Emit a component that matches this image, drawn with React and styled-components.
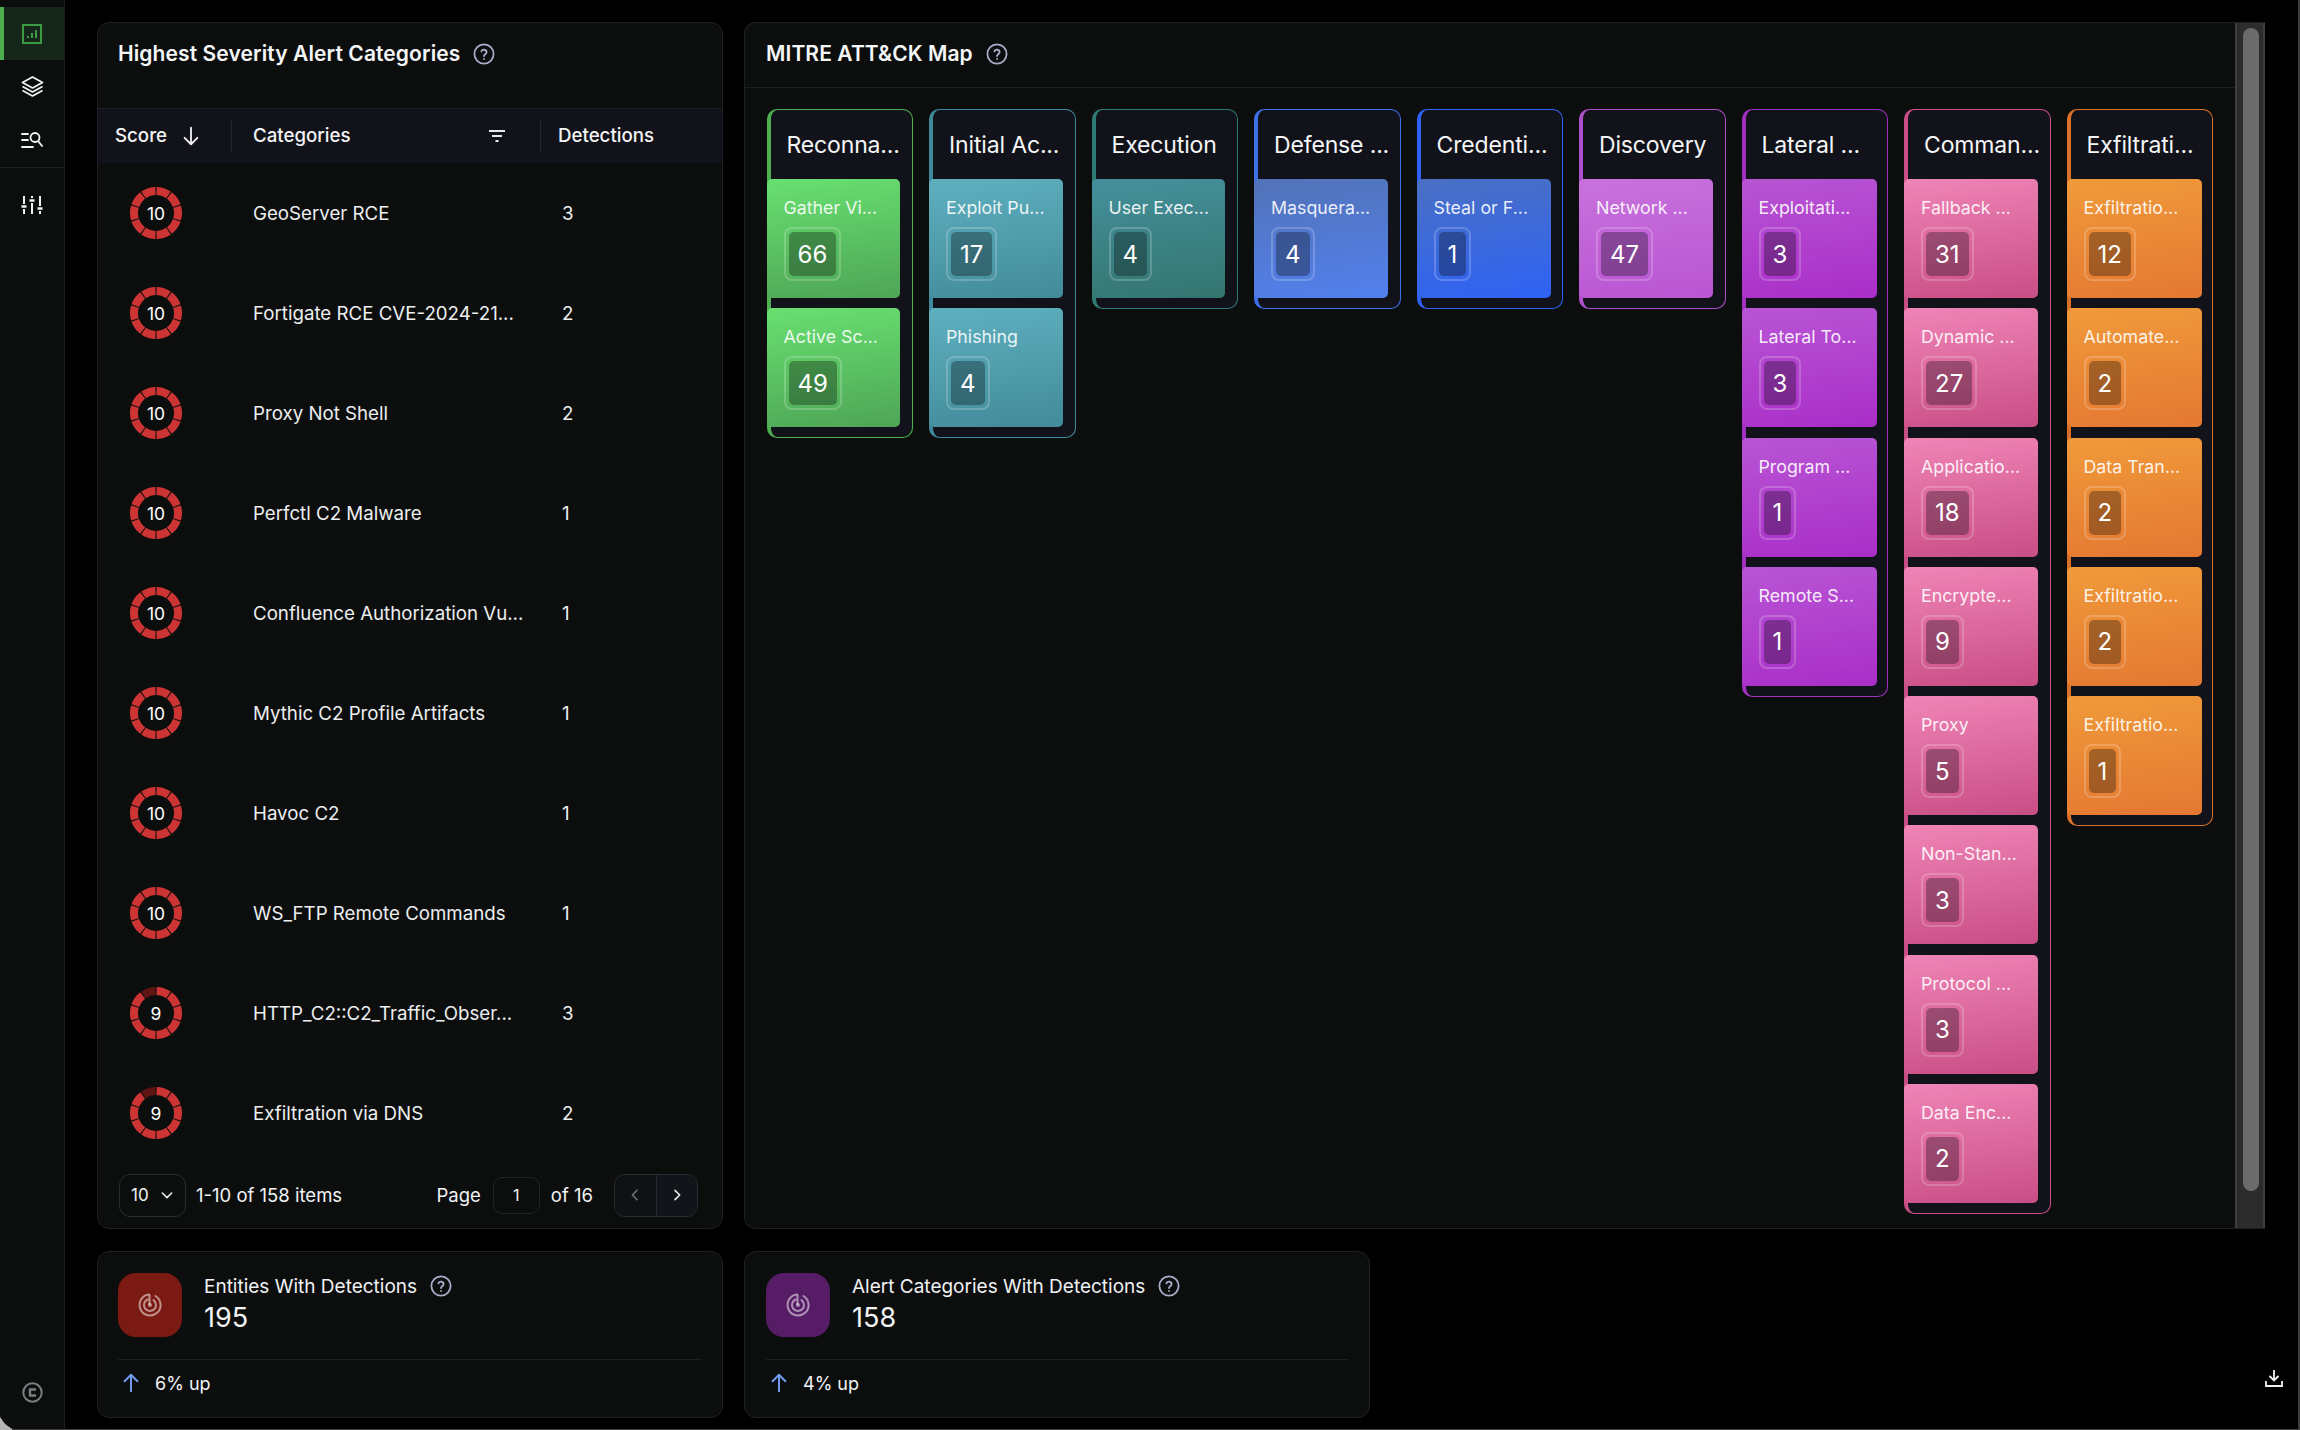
import React from "react";
import styled, { createGlobalStyle } from "styled-components";

const Global = createGlobalStyle`
  html { height: 100%; background: linear-gradient(45deg, #b5b5b5 0 9px, #3c3c3c 9px); }
  body { margin: 0; padding: 0; font-family: "Inter", "Liberation Sans", sans-serif; color: #f2f3f5; }
  * { box-sizing: border-box; }
`;

const Shell = styled.div`
  width: 2298px; height: 1429px; background: #000; display: flex; overflow: hidden;
  border-bottom-left-radius: 18px;
`;
const Rail = styled.nav`
  width: 65px; flex: none; background: #0c0e0e; border-right: 1px solid #1c1e22;
  display: flex; flex-direction: column; padding-top: 7px;
`;
const RailItem = styled.div`
  height: ${p => p.$h || 53}px; display: flex; align-items: center; justify-content: center;
  background: ${p => p.$active ? "#16261a" : "transparent"};
  border-left: 4px solid ${p => p.$active ? "#4caf50" : "transparent"};
  padding-right: 4px; flex: none;
`;
const RailLine = styled.div` height: 1px; background: #1c1e22; margin: 0 0 11px; flex: none; `;
const RailSpacer = styled.div` flex: 1; `;
const RailFoot = styled.div` display: flex; justify-content: center; padding-bottom: 26px; `;

const Main = styled.main`
  flex: 1; padding: 22px 33px 0 32px; display: grid;
  grid-template-columns: 626px 1fr; grid-template-rows: 1207px 167px; column-gap: 21px; row-gap: 22px;
`;
const Card = styled.section`
  background: #0c0e0e; border: 1px solid #1e2025; border-radius: 12px; min-width: 0;
`;
const LeftCard = styled(Card)` display: flex; flex-direction: column; overflow: hidden; `;
const CardTitle = styled.h2`
  margin: 0; font-size: 21px; font-weight: 600; display: flex; align-items: center; gap: 12px;
  height: 61px; padding: 0 0 0 20px; color: #f5f6f7; white-space: nowrap; letter-spacing: 0.1px; flex: none;
`;
const Gap = styled.div` height: 24px; flex: none; `;
const THead = styled.div`
  height: 55px; flex: none; background: #12131a; border-top: 1px solid #1e2028; display: flex; align-items: center;
  font-size: 18.7px; font-weight: 500; padding-bottom: 1px;
`;
const Th = styled.div`
  height: 34px; display: flex; align-items: center; width: ${p => p.$w}px; padding-left: ${p => p.$pl}px;
  border-right: ${p => p.$sep ? "1px solid #24262e" : "none"}; justify-content: ${p => p.$between ? "space-between" : "flex-start"};
  padding-right: ${p => p.$pr || 0}px; flex: none;
`;
const Rows = styled.div` flex: none; `;
const Row = styled.div`
  height: 100px; display: flex; align-items: center; font-size: 18.7px; color: #eceef0;
`;
const ScoreCell = styled.div` width: 155px; padding-left: 32px; flex: none; display: flex; `;
const NameCell = styled.div` width: 305px; flex: none; white-space: nowrap; `;
const CountCell = styled.div` padding-left: 4px; `;

const Pager = styled.div`
  height: 65px; flex: none; padding: 0 24px 1px 21px; display: flex; align-items: center; font-size: 18.5px;
`;
const Select = styled.div`
  width: 67px; height: 43px; border: 1px solid #2a2c33; border-radius: 11px; display: flex; align-items: center;
  justify-content: space-between; padding: 0 10px 0 11px; margin-right: 10px; font-size: 17px;
`;
const PagerText = styled.span` white-space: nowrap; `;
const PagerSpace = styled.div` flex: 1; `;
const PageInput = styled.div`
  width: 47px; height: 37px; border: 1px solid #22242a; border-radius: 9px; display: flex; align-items: center;
  justify-content: center; margin: 0 11px 0 12px; font-size: 16px;
`;
const PageBtns = styled.div`
  margin-left: 21px; width: 84px; height: 43px; border: 1px solid #2a2c33; border-radius: 11px; display: flex; overflow: hidden; flex: none;
`;
const PageBtn = styled.div`
  flex: 1; display: flex; align-items: center; justify-content: center;
  background: ${p => p.$dim ? "#0f1114" : "#12141a"};
  border-left: ${p => p.$sep ? "1px solid #2a2c33" : "none"};
`;

const MapCard = styled(Card)`
  display: flex; flex-direction: column; position: relative; overflow: hidden;
  border-radius: 12px 0 0 12px; border-right: none;
`;
const MapHead = styled(CardTitle)` height: 65px; padding: 0 0 3px 21px; border-bottom: 1px solid #1c1e21; `;
const MapBody = styled.div` display: flex; gap: 16px; align-items: flex-start; padding: 21px 0 0 21.500px; `;
const Track = styled.div`
  position: absolute; right: 0; top: 0; bottom: 0; width: 30px; background: #2c2c2c;
  border-left: 2px solid #3e3e3e; border-right: 2px solid #3e3e3e;
`;
const Thumb = styled.div`
  position: absolute; left: 6px; top: 5px; width: 16px; height: 1163px; background: #6b6b6b; border-radius: 8px;
`;
const Column = styled.div`
  width: 146.5px; flex: none; background: #12131a; border: 1px solid ${p => p.$c}; border-left-width: 4px;
  border-radius: 10px; padding-bottom: 10px;
`;
const ColHead = styled.div`
  height: 69px; display: flex; align-items: center; padding: 0 0 0 16px; font-size: 23px; font-weight: 400; white-space: nowrap; color: #f5f6f7; letter-spacing: -0.15px;
`;
const Tech = styled.div`
  margin-left: -4px; width: ${p => p.$w || 134}px; height: 119px; border-radius: 5px; padding: 18px 0 0 17px;
  background: linear-gradient(172deg, ${p => p.$a}, ${p => p.$b});
  & + & { margin-top: 10.25px; }
`;
const TechName = styled.div`
  font-size: 17.8px; line-height: 22px; color: rgba(255,255,255,.9); white-space: nowrap; font-weight: 400;
`;
const Badge = styled.div`
  display: inline-flex; margin-top: 8px; border: 2px solid rgba(255,255,255,.2); border-radius: 8px; padding: 3px;
`;
const BadgeIn = styled.div`
  height: 44px; padding: 0 9px; border-radius: 5px; background: rgba(0,0,0,.3); display: flex; align-items: center; justify-content: center;
  font-size: 24px; font-weight: 400; color: #fff;
`;

const Stat = styled(Card)` padding: 21px 20px 0; `;
const StatSecond = styled(Stat)` width: 626px; padding-left: 21px; `;
const StatTop = styled.div` display: flex; gap: 22px; height: 87px; border-bottom: 1px solid #1c1e21; padding-bottom: 22px; `;
const StatIcon = styled.div`
  width: 64px; height: 64px; border-radius: 18px; background: ${p => p.$bg}; display: flex; align-items: center; justify-content: center; flex: none;
`;
const StatBody = styled.div` display: flex; flex-direction: column; padding-top: 2px; `;
const StatTitle = styled.div` display: flex; align-items: center; gap: 12px; font-size: 19px; font-weight: 400; height: 22px; white-space: nowrap; color: #f0f1f3; `;
const StatValue = styled.div` font-size: 27px; font-weight: 400; margin-top: 4px; line-height: 34px; `;
const StatFoot = styled.div` display: flex; align-items: center; gap: 13px; height: 46px; padding-left: 2px; font-size: 18px; `;
const Download = styled.div` position: absolute; right: 17px; bottom: 39px; `;
const RingBox = styled.div` position: relative; width: 52px; height: 52px; `;
const RingNum = styled.span`
  position: absolute; inset: 1px 0 0; display: flex; align-items: center; justify-content: center; font-size: 17.5px; color: #fff; font-weight: 400;
`;

const Help = () => (
  <svg width="24" height="24" viewBox="0 0 24 24" fill="none" stroke="#a9acc9" strokeWidth="1.8" strokeLinecap="round" strokeLinejoin="round">
    <circle cx="12" cy="12" r="9.6" /><path d="M9.4 9.400a2.700 2.700 0 0 1 5.200 .9c0 1.800-2.600 2.100-2.600 3.700" /><path d="M12 17h.01" />
  </svg>
);
const Ring = ({ score }) => {
  const segs = [];
  for (let i = 0; i < 10; i++) {
    const a0 = (i * 36 + 1.4 - 90) * Math.PI / 180, a1 = ((i + 1) * 36 - 1.4 - 90) * Math.PI / 180;
    const P = (r, a) => `${26 + r * Math.cos(a)} ${26 + r * Math.sin(a)}`;
    segs.push(<path key={i} d={`M${P(26, a0)} A26 26 0 0 1 ${P(26, a1)} L${P(18, a1)} A18 18 0 0 0 ${P(18, a0)} Z`} fill={i < score ? "#cd3535" : "#5e1511"} />);
  }
  return (
    <RingBox>
      <svg width="52" height="52" viewBox="0 0 52 52">{segs}</svg>
      <RingNum>{score}</RingNum>
    </RingBox>
  );
};
const Radar = () => (
  <svg width="24" height="24" viewBox="0 0 24 24" fill="none" stroke="rgba(255,255,255,.52)" strokeWidth="2" strokeLinecap="round">
    <path d="M10.500 1.600A10.500 10.500 0 1 0 17.500 3" />
    <path d="M9.500 6.500A6 6 0 1 0 15.500 7.100" />
    <path d="M11.500 2V11" /><circle cx="12" cy="12" r="2" fill="rgba(255,255,255,.52)" stroke="none" />
  </svg>
);
const Chevron = ({ d, color = "#e6e8ec", size = 16 }) => (
  <svg width={size} height={size} viewBox="0 0 24 24" fill="none" stroke={color} strokeWidth="2.4" strokeLinecap="round" strokeLinejoin="round"><path d={d} /></svg>
);

const rows = [
  [10, "GeoServer RCE", 3], [10, "Fortigate RCE CVE-2024-21...", 2], [10, "Proxy Not Shell", 2], [10, "Perfctl C2 Malware", 1],
  [10, "Confluence Authorization Vu...", 1], [10, "Mythic C2 Profile Artifacts", 1], [10, "Havoc C2", 1], [10, "WS_FTP Remote Commands", 1],
  [9, "HTTP_C2::C2_Traffic_Obser...", 3], [9, "Exfiltration via DNS", 2],
];
const cols = [
  { t: "Reconna...", c: "#4caf50", a: "#68e070", b: "#4ea556", w: 133, items: [["Gather Vi...", 66], ["Active Sc...", 49]] },
  { t: "Initial Ac...", c: "#3e8a9a", a: "#5fb0bf", b: "#428b9a", w: 134, items: [["Exploit Pu...", 17], ["Phishing", 4]] },
  { t: "Execution", c: "#2f7a74", a: "#44909c", b: "#34756f", w: 133, items: [["User Exec...", 4]] },
  { t: "Defense ...", c: "#3f6fe6", a: "#5273b8", b: "#5280ee", w: 134, items: [["Masquera...", 4]] },
  { t: "Credenti...", c: "#2e62f4", a: "#4a70c4", b: "#2e62f4", w: 134, items: [["Steal or F...", 1]] },
  { t: "Discovery", c: "#b04fcc", a: "#c872dd", b: "#b955d2", w: 134, items: [["Network ...", 47]] },
  { t: "Lateral ...", c: "#a030c0", a: "#b855d4", b: "#aa2ec8", w: 135, items: [["Exploitati...", 3], ["Lateral To...", 3], ["Program ...", 1], ["Remote S...", 1]] },
  { t: "Comman...", c: "#c84e86", a: "#f084b6", b: "#c84e86", w: 134, items: [["Fallback ...", 31], ["Dynamic ...", 27], ["Applicatio...", 18], ["Encrypte...", 9], ["Proxy", 5], ["Non-Stan...", 3], ["Protocol ...", 3], ["Data Enc...", 2]] },
  { t: "Exfiltrati...", c: "#d87028", a: "#f09a3a", b: "#e47832", w: 135, items: [["Exfiltratio...", 12], ["Automate...", 2], ["Data Tran...", 2], ["Exfiltratio...", 2], ["Exfiltratio...", 1]] },
];
const stats = [
  { Comp: Stat, bg: "#7a1a12", t: "Entities With Detections", v: 195, f: "6% up" },
  { Comp: StatSecond, bg: "#561c66", t: "Alert Categories With Detections", v: 158, f: "4% up" },
];

export default function App() {
  return (
    <>
      <Global />
      <Shell>
        <Rail>
          <RailItem $active $h={53}>
            <svg width="20" height="20" viewBox="0 0 20 20" fill="none"><rect x="1" y="1" width="18" height="18" stroke="#3f9a45" strokeWidth="2" /><path d="M6 14v-2M10 14V9M14 14V6" stroke="#3f9a45" strokeWidth="2" /></svg>
          </RailItem>
          <RailItem $h={52}>
            <svg width="23" height="21" viewBox="0 0 23 21" fill="none" stroke="#f2f3f5" strokeWidth="1.7" strokeLinejoin="round"><path d="M11.500 1 21.500 6.500 11.500 12 1.500 6.500z" /><path d="M1.500 10.500 11.500 16 21.500 10.500" /><path d="M1.500 14.500 11.500 20 21.500 14.500" /></svg>
          </RailItem>
          <RailItem $h={55}>
            <svg width="22" height="18" viewBox="0 0 22 18" fill="none" stroke="#f2f3f5" strokeWidth="1.8" strokeLinecap="round"><path d="M1 3h6M1 9h6M1 16h11" /><circle cx="14" cy="6.500" r="4.500" /><path d="M17.500 10.500 21 15" /></svg>
          </RailItem>
          <RailLine />
          <RailItem $h={52}>
            <svg width="22" height="20" viewBox="0 0 22 20" fill="none" stroke="#f2f3f5" strokeWidth="2"><path d="M3 1v8M3 14v5M11 1v2M11 8v11M19 1v10M19 16v3" /><path d="M0.500 11.500h5M8.500 5.500h5M16.500 13.500h5" strokeWidth="2.6" /></svg>
          </RailItem>
          <RailSpacer />
          <RailFoot>
            <svg width="21" height="21" viewBox="0 0 21 21" fill="none" stroke="#7c7e82" strokeWidth="2"><circle cx="10.500" cy="10.500" r="9.200" /><path d="M14 7.500H8v6h6" strokeWidth="2.4" /></svg>
          </RailFoot>
        </Rail>
        <Main>
          <LeftCard>
            <CardTitle>Highest Severity Alert Categories <Help /></CardTitle>
            <Gap />
            <THead>
              <Th $w={134} $pl={17} $sep>Score&nbsp;&nbsp;
                <ArrowDown />
              </Th>
              <Th $w={309} $pl={21} $pr={34} $sep $between>Categories
                <svg width="18" height="14" viewBox="0 0 18 14" fill="none" stroke="#e6e8ec" strokeWidth="1.8"><path d="M1 2h16M4 7h10M7.500 12h3" /></svg>
              </Th>
              <Th $pl={17}>Detections</Th>
            </THead>
            <Rows>
              {rows.map(([s, n, c], i) => (
                <Row key={i}>
                  <ScoreCell><Ring score={s} /></ScoreCell>
                  <NameCell>{n}</NameCell>
                  <CountCell>{c}</CountCell>
                </Row>
              ))}
            </Rows>
            <Pager>
              <Select>10 <Chevron d="M5 9l7 7 7-7" /></Select>
              <PagerText>1-10 of 158 items</PagerText>
              <PagerSpace />
              <PagerText>Page</PagerText>
              <PageInput>1</PageInput>
              <PagerText>of 16</PagerText>
              <PageBtns>
                <PageBtn $dim><Chevron d="M15 5l-7 7 7 7" color="#6c6f76" /></PageBtn>
                <PageBtn $sep><Chevron d="M9 5l7 7-7 7" /></PageBtn>
              </PageBtns>
            </Pager>
          </LeftCard>
          <MapCard>
            <MapHead>MITRE ATT&amp;CK Map <Help /></MapHead>
            <MapBody>
              {cols.map((col, i) => (
                <Column key={i} $c={col.c}>
                  <ColHead>{col.t}</ColHead>
                  {col.items.map(([n, v], j) => (
                    <Tech key={j} $a={col.a} $b={col.b} $w={col.w}>
                      <TechName>{n}</TechName>
                      <Badge><BadgeIn>{v}</BadgeIn></Badge>
                    </Tech>
                  ))}
                </Column>
              ))}
            </MapBody>
            <Track><Thumb /></Track>
          </MapCard>
          {stats.map(({ Comp, bg, t, v, f }, i) => (
            <Comp key={i}>
              <StatTop>
                <StatIcon $bg={bg}><Radar /></StatIcon>
                <StatBody>
                  <StatTitle>{t} <Help /></StatTitle>
                  <StatValue>{v}</StatValue>
                </StatBody>
              </StatTop>
              <StatFoot>
                <svg width="22" height="22" viewBox="0 0 24 24" fill="none" stroke="#6f9cf0" strokeWidth="2.2" strokeLinecap="round" strokeLinejoin="round"><path d="M12 21V3M5 10l7-7 7 7" /></svg>
                {f}
              </StatFoot>
            </Comp>
          ))}
        </Main>
        <Download>
          <svg width="18" height="18" viewBox="0 0 18 18" fill="none" stroke="#f0f1f3" strokeWidth="1.8"><path d="M9 1v10M4.500 7 9 11.500 13.500 7" /><path d="M1 12v5h16v-5" /></svg>
        </Download>
      </Shell>
    </>
  );
}

const SortIcon = styled.svg` margin-left: 3px; `;
function ArrowDown() {
  return (
    <SortIcon width="22" height="22" viewBox="0 0 24 24" fill="none" stroke="#f0f1f3" strokeWidth="2" strokeLinecap="round" strokeLinejoin="round"><path d="M12 3v18M5 14l7 7 7-7" /></SortIcon>
  );
}
